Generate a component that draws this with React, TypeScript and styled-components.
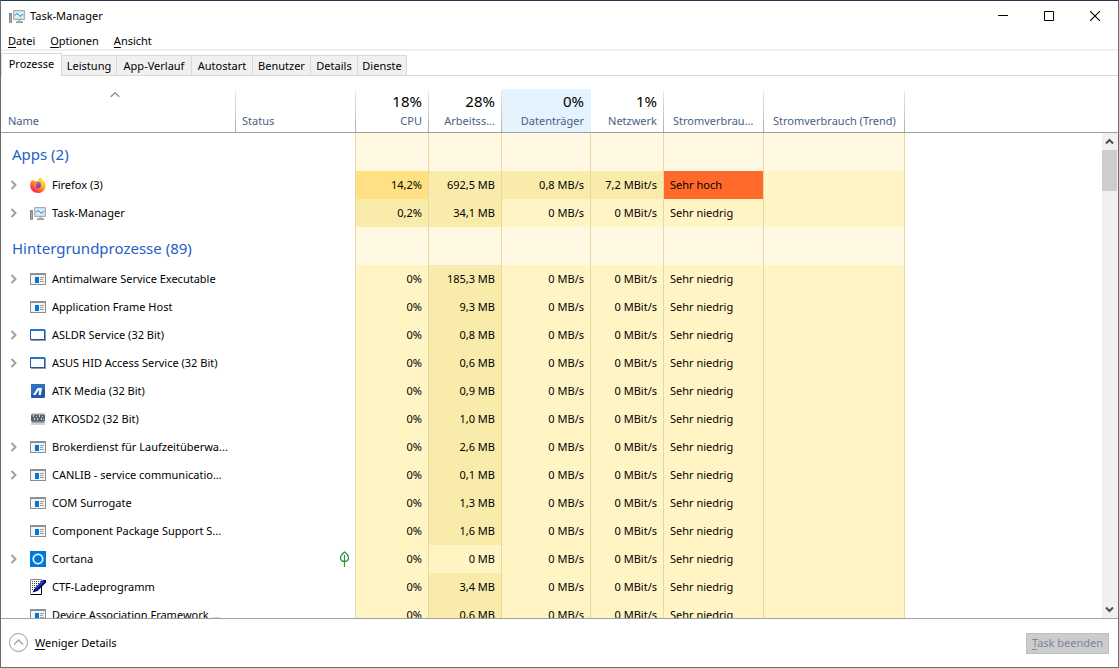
import React from "react";
import styled, { createGlobalStyle, css } from "styled-components";

const Global = createGlobalStyle`
  * { box-sizing: border-box; }
  body { margin: 0; background: #fff; }
  body, button {
    font-family: "Noto Sans", "Open Sans", sans-serif;
    font-size: 11px;
    line-height: 16px;
    color: #000;
  }
  button { margin: 0; padding: 0; border: 0; background: none; }
  svg { display: block; flex: none; }
`;

const Window = styled.div`
  display: flex;
  flex-direction: column;
  height: 100vh;
  border: 1px solid #6b6b6b;
  border-top-color: #24344f;
  background: #fff;
  overflow: hidden;
`;

const TitleBar = styled.header`
  display: flex;
  align-items: center;
  height: 30px;
  flex: none;
  padding-left: 8px;
`;

const Title = styled.h1`
  flex: 1;
  margin: 0 0 0 5px;
  font-size: 11px;
  font-weight: 400;
`;

const CaptionButton = styled.button`
  display: flex;
  align-items: center;
  justify-content: center;
  width: 46px;
  height: 30px;
`;

const MenuBar = styled.nav`
  display: flex;
  gap: 15px;
  flex: none;
  height: 20px;
  padding: 2px 7px 0;
  border-bottom: 2px solid #f0f0f0;
`;

const Key = styled.span`
  text-decoration: underline;
  text-decoration-thickness: 1px;
  text-underline-offset: 2px;
`;

const TabStrip = styled.div`
  display: flex;
  align-items: flex-end;
  flex: none;
  height: 25px;
  border-bottom: 1px solid #d9d9d9;
`;

const Tab = styled.button<{ $width: number; $active?: boolean }>`
  width: ${(p) => p.$width}px;
  height: 20px;
  border: solid #d9d9d9;
  border-width: 1px 1px 0 0;
  background: #f0f0f0;
  white-space: nowrap;
  ${(p) =>
    p.$active &&
    css`
      height: 23px;
      margin-bottom: -1px;
      padding-bottom: 2px;
      border-left-width: 1px;
      background: #fff;
    `}
`;

const Content = styled.main`
  display: flex;
  flex: 1;
  min-height: 0;
  border-bottom: 1px solid #a0a0a0;
`;

const Viewport = styled.div`
  flex: 1;
  min-width: 0;
  overflow: hidden;
`;

const Table = styled.table`
  width: 100%;
  table-layout: fixed;
  border-collapse: separate;
  border-spacing: 0;
`;

const Col = styled.col<{ $width?: number }>`
  width: ${(p) => (p.$width ? `${p.$width}px` : "auto")};
`;

const HeadCell = styled.th`
  height: 57px;
  padding: 13px 0 0;
  border-bottom: 1px solid #a0a0a0;
  font-weight: 400;
  color: #4c607f;
`;

const HeadBox = styled.div<{ $align?: "left" | "right"; $hot?: boolean; $inset?: number }>`
  display: flex;
  flex-direction: column;
  height: 43px;
  padding: 2px 7px 0 ${(p) => p.$inset ?? 6}px;
  gap: 2px;
  text-align: ${(p) => p.$align ?? "right"};
  white-space: nowrap;
  background: ${(p) =>
    p.$hot
      ? "#e5f3ff"
      : "linear-gradient(#e8e8e8, #b0b0b0) right bottom / 1px 41px no-repeat"};
`;

const Total = styled.span`
  height: 20px;
  font-size: 15px;
  line-height: 20px;
  color: #000;
`;

const SortMark = styled.span`
  display: flex;
  justify-content: center;
  height: 20px;
  padding-right: 8px;
`;

const GroupName = styled.th`
  height: 38px;
  padding: 4px 0 0 11px;
  font-size: 15px;
  font-weight: 400;
  line-height: 20px;
  text-align: left;
  white-space: nowrap;
  color: #2460c8;
`;

const GroupCell = styled.td`
  padding: 0;
  border-right: 1px solid #e9d6a0;
  background: #fff8e2;
`;

const NameCell = styled.td`
  height: 28px;
  padding: 0;
`;

const NameBox = styled.div`
  display: flex;
  align-items: center;
  height: 28px;
  padding-left: 9px;
  white-space: nowrap;
`;

const Expander = styled.button`
  display: flex;
  align-items: center;
  width: 14px;
  height: 16px;
  margin-right: 6px;
`;

const NoExpander = styled.span`
  width: 20px;
`;

const Label = styled.span`
  margin-left: 6px;
`;

const StatusCell = styled.td`
  padding: 0 5px 0 0;
  border-right: 1px solid #e9d6a0;
`;

const StatusBox = styled.div`
  display: flex;
  justify-content: flex-end;
`;

const heat = { base: "#fff4c4", mid: "#f9ecaa", high: "#ffe184", alarm: "#ff6a2b" };
type Heat = keyof typeof heat;

const Cell = styled.td<{ $heat?: Heat; $left?: boolean }>`
  padding: 0 6px;
  border-right: 1px solid #e9d6a0;
  background: ${(p) => heat[p.$heat ?? "base"]};
  background-clip: padding-box;
  text-align: ${(p) => (p.$left ? "left" : "right")};
  white-space: nowrap;
`;

const ScrollSide = styled.div`
  display: flex;
  flex-direction: column;
  width: 16px;
  flex: none;
`;

const ScrollHead = styled.div`
  height: 57px;
  flex: none;
  border-bottom: 1px solid #a0a0a0;
`;

const ScrollTrack = styled.div`
  display: flex;
  flex-direction: column;
  flex: 1;
  background: #f0f0f0;
`;

const ScrollButton = styled.button`
  display: flex;
  align-items: center;
  justify-content: center;
  width: 15px;
  height: 17px;
`;

const Thumb = styled.div`
  width: 15px;
  height: 41px;
  margin-bottom: auto;
  background: #cdcdcd;
`;

const Footer = styled.footer`
  display: flex;
  align-items: center;
  justify-content: space-between;
  flex: none;
  height: 48px;
  padding: 0 9px 0 7px;
`;

const LessButton = styled.button`
  display: flex;
  align-items: center;
  gap: 7px;
`;

const EndButton = styled.button`
  min-width: 83px;
  height: 21px;
  border: 1px solid #bfbfbf;
  background: #cccccc;
  color: #7d86a3;
`;

const TaskIcon = () => (
  <svg width="16" height="16" viewBox="0 0 16 16">
    <path d="M0.5 5.5h2v9h-2z" fill="#a8adb0" stroke="#858a8d" />
    <path d="M0 5h3v2H0z" fill="#8b9093" />
    <path d="M1 7h1v1H1z" fill="#36c436" />
    <path d="M4.5 2.5h11v9h-11z" fill="#d5d8da" stroke="#aaaeb1" />
    <path d="M6 4h8v6H6z" fill="#d4f1fd" />
    <path d="M6 7.500l1.700-2 1.800 1 1.800 2L13 6.500l1 .5" fill="none" stroke="#1583c4" />
    <path d="M9 12h3v1H9zM7 13h7v2H7z" fill="#b8bcbe" />
    <path d="M7 14h7v1H7z" fill="#93979a" />
  </svg>
);

const FirefoxIcon = () => (
  <svg width="16" height="16" viewBox="0 0 16 16">
    <defs>
      <linearGradient id="ffBody" x1="0.85" y1="0.1" x2="0.2" y2="0.95">
        <stop offset="0" stopColor="#fff14a" />
        <stop offset="0.4" stopColor="#ffb32b" />
        <stop offset="0.68" stopColor="#ff6030" />
        <stop offset="1" stopColor="#ee2068" />
      </linearGradient>
      <radialGradient id="ffGlobe" cx="0.5" cy="0.25" r="0.8">
        <stop offset="0" stopColor="#a05ae8" />
        <stop offset="1" stopColor="#5b3fb8" />
      </radialGradient>
    </defs>
    <path
      d="M10.2 0.2c1 .5 2 1.5 2.3 2.8 1.7 1.2 3.2 3 3.3 5.4C15.900 12.600 12.400 16 8 16S.2 12.700 .2 8.500C.2 6 1.200 4.200 2.300 2.600l.6 1.500L4.200 3l.9 1.400c.9-.5 2-.7 3-.5C8.500 2.400 9 1 10.200.2z"
      fill="url(#ffBody)"
    />
    <circle cx="8" cy="8" r="2.900" fill="url(#ffGlobe)" />
    <path d="M3.600 5.400c1.500-.4 3-.1 3.900.9-.2.7-1.400.9-1.700 1.300-.2.700.1 1.400 1 1.700-1.200 1.100-2.600.8-3.200-.3z" fill="#ff8a2a" />
  </svg>
);

const AppIcon = () => (
  <svg width="16" height="16" viewBox="0 0 16 16" shapeRendering="crispEdges">
    <path d="M0 2h16v12H0z" fill="#8b8f91" />
    <path d="M1 4h14v9H1z" fill="#f3f3f3" />
    <path d="M5 6h4v6H5z" fill="#0078d7" />
    <path d="M10 6h4v1h-4zM10 8h3v1h-3zM10 10h4v1h-4z" fill="#9b9fa1" />
  </svg>
);

const FrameIcon = () => (
  <svg width="16" height="16" viewBox="0 0 16 16" shapeRendering="crispEdges">
    <path d="M1 3h15v11H1z" fill="#8c99b0" />
    <path d="M0 2h15v11H0z" fill="#2c5697" />
    <path d="M0 2h15v2H0z" fill="#1e78d2" />
    <path d="M1 4h13v8H1z" fill="#fafcff" />
  </svg>
);

const AtkIcon = () => (
  <svg width="16" height="16" viewBox="0 0 16 16">
    <rect x="1" y="1" width="14" height="14" rx="1" fill="#2059ad" />
    <path d="M1 1h14v5L1 12z" fill="#2e6ec3" />
    <path d="M3 12l4.500-7H12l-1.200 7H8.500l.8-4.500H8.500L5.500 12z" fill="#fff" />
  </svg>
);

const OsdIcon = () => (
  <svg width="16" height="16" viewBox="0 0 16 16" shapeRendering="crispEdges">
    <path d="M1 2h14v12H1z" fill="#cdd2d6" />
    <path d="M2 3h12v10H2z" fill="#9aa2aa" />
    <path d="M1 4h14v6H1z" fill="#59616a" />
    <path d="M3.500 4v2M6.500 5v1M9.500 4v2M12.500 5v1M4.500 7v2M7.500 7v2M11.500 7v2M13.500 8v1" stroke="#d8dce0" />
    <path d="M2 10h12v1H2z" fill="#7b838b" />
    <path d="M2 12h12v1H2z" fill="#d0d4d8" />
  </svg>
);

const CortanaIcon = () => (
  <svg width="16" height="16" viewBox="0 0 16 16">
    <path d="M0 0h16v16H0z" fill="#0078d7" />
    <circle cx="8" cy="8" r="4.800" fill="none" stroke="#8fd0f7" strokeWidth="2" />
    <circle cx="8" cy="8" r="4.600" fill="none" stroke="#fff" />
  </svg>
);

const CtfIcon = () => (
  <svg width="16" height="16" viewBox="0 0 16 16">
    <path d="M.5 .5h11v15H.5z" fill="#fff" stroke="#888" />
    <path d="M2 2.500h9M2 4.500h8M2 6.500h7M2 8.500h5M2 10.500h3" stroke="#444" strokeDasharray="1 1" />
    <path d="M1 15.500h10.500V8" fill="none" stroke="#000" />
    <path d="M2.500 13.500L5 9l8-8h3v2.500L7.500 12z" fill="#000050" />
    <path d="M5.500 10.500L14 2" stroke="#1530e0" strokeWidth="1.800" />
  </svg>
);

const LeafIcon = () => (
  <svg width="11" height="16" viewBox="0 0 11 16">
    <path d="M5.500 1C7 2.300 9.500 3.800 9.500 6.800S7.600 10.500 5.500 10.500 1.500 9.500 1.500 6.800 4 2.300 5.500 1z" fill="none" stroke="#2c9447" strokeWidth="1.300" />
    <path d="M5.500 4v12" stroke="#2c9447" strokeWidth="1.200" />
  </svg>
);

const icons = {
  task: TaskIcon,
  firefox: FirefoxIcon,
  app: AppIcon,
  frame: FrameIcon,
  atk: AtkIcon,
  osd: OsdIcon,
  cortana: CortanaIcon,
  ctf: CtfIcon,
};

interface Process {
  name: string;
  icon: keyof typeof icons;
  open?: boolean;
  leaf?: boolean;
  cpu?: string;
  mem: string;
  disk?: string;
  net?: string;
  power?: string;
  heats?: Heat[];
}

const groups: { title: string; rows: Process[] }[] = [
  {
    title: "Apps (2)",
    rows: [
      {
        name: "Firefox (3)",
        icon: "firefox",
        open: true,
        cpu: "14,2%",
        mem: "692,5 MB",
        disk: "0,8 MB/s",
        net: "7,2 MBit/s",
        power: "Sehr hoch",
        heats: ["high", "mid", "mid", "mid", "alarm"],
      },
      { name: "Task-Manager", icon: "task", open: true, cpu: "0,2%", mem: "34,1 MB", heats: ["mid", "mid"] },
    ],
  },
  {
    title: "Hintergrundprozesse (89)",
    rows: [
      { name: "Antimalware Service Executable", icon: "app", open: true, mem: "185,3 MB" },
      { name: "Application Frame Host", icon: "app", mem: "9,3 MB" },
      { name: "ASLDR Service (32 Bit)", icon: "frame", open: true, mem: "0,8 MB" },
      { name: "ASUS HID Access Service (32 Bit)", icon: "frame", open: true, mem: "0,6 MB" },
      { name: "ATK Media (32 Bit)", icon: "atk", mem: "0,9 MB" },
      { name: "ATKOSD2 (32 Bit)", icon: "osd", mem: "1,0 MB" },
      { name: "Brokerdienst für Laufzeitüberwa...", icon: "app", open: true, mem: "2,6 MB" },
      { name: "CANLIB - service communicatio...", icon: "app", open: true, mem: "0,1 MB" },
      { name: "COM Surrogate", icon: "app", mem: "1,3 MB" },
      { name: "Component Package Support S...", icon: "app", mem: "1,6 MB" },
      { name: "Cortana", icon: "cortana", open: true, leaf: true, mem: "0 MB", heats: ["base", "base"] },
      { name: "CTF-Ladeprogramm", icon: "ctf", mem: "3,4 MB" },
      { name: "Device Association Framework ...", icon: "app", mem: "0,6 MB" },
    ],
  },
];

const tabs: [string, number][] = [
  ["Prozesse", 61],
  ["Leistung", 55],
  ["App-Verlauf", 75],
  ["Autostart", 61],
  ["Benutzer", 58],
  ["Details", 47],
  ["Dienste", 49],
];

const totals: [string, string][] = [
  ["18%", "CPU"],
  ["28%", "Arbeitss..."],
  ["0%", "Datenträger"],
  ["1%", "Netzwerk"],
];

const widths = [235, 120, 73, 73, 89, 73, 100, 141];

function ProcessRow({ row }: { row: Process }) {
  const Icon = icons[row.icon];
  const h = row.heats ?? ["base", "mid"];
  return (
    <tr>
      <NameCell>
        <NameBox>
          {row.open ? (
            <Expander aria-label="Erweitern">
              <svg width="8" height="10" viewBox="0 0 8 10">
                <path d="M1.500 1l4 4-4 4" fill="none" stroke="#a0a0a0" strokeWidth="2" />
              </svg>
            </Expander>
          ) : (
            <NoExpander />
          )}
          <Icon />
          <Label>{row.name}</Label>
        </NameBox>
      </NameCell>
      <StatusCell>
        <StatusBox>{row.leaf && <LeafIcon />}</StatusBox>
      </StatusCell>
      <Cell $heat={h[0]}>{row.cpu ?? "0%"}</Cell>
      <Cell $heat={h[1]}>{row.mem}</Cell>
      <Cell $heat={h[2]}>{row.disk ?? "0 MB/s"}</Cell>
      <Cell $heat={h[3]}>{row.net ?? "0 MBit/s"}</Cell>
      <Cell $heat={h[4]} $left>
        {row.power ?? "Sehr niedrig"}
      </Cell>
      <Cell />
      <td />
    </tr>
  );
}

export default function App() {
  return (
    <Window>
      <Global />
      <TitleBar>
        <TaskIcon />
        <Title>Task-Manager</Title>
        <CaptionButton aria-label="Minimieren">
          <svg width="10" height="10" viewBox="0 0 10 10">
            <path d="M0 4.500h10" stroke="#000" />
          </svg>
        </CaptionButton>
        <CaptionButton aria-label="Maximieren">
          <svg width="10" height="10" viewBox="0 0 10 10">
            <path d="M.5 .5h9v9h-9z" fill="none" stroke="#000" />
          </svg>
        </CaptionButton>
        <CaptionButton aria-label="Schließen">
          <svg width="10" height="10" viewBox="0 0 10 10">
            <path d="M0 0l10 10M10 0L0 10" stroke="#000" strokeWidth="1.100" />
          </svg>
        </CaptionButton>
      </TitleBar>
      <MenuBar>
        <button><Key>D</Key>atei</button>
        <button><Key>O</Key>ptionen</button>
        <button><Key>A</Key>nsicht</button>
      </MenuBar>
      <TabStrip role="tablist">
        {tabs.map(([name, width], i) => (
          <Tab key={name} role="tab" aria-selected={i === 0} $width={width} $active={i === 0}>
            {name}
          </Tab>
        ))}
      </TabStrip>
      <Content>
        <Viewport>
          <Table>
            <colgroup>
              {widths.map((w, i) => (
                <Col key={i} $width={w} />
              ))}
              <Col />
            </colgroup>
            <thead>
              <tr>
                <HeadCell scope="col">
                  <HeadBox $align="left" $inset={7}>
                    <SortMark>
                      <svg width="10" height="7" viewBox="0 0 10 7">
                        <path d="M.8 5.800L5 1.800l4.200 4" fill="none" stroke="#808a9a" strokeWidth="1.300" />
                      </svg>
                    </SortMark>
                    <span>Name</span>
                  </HeadBox>
                </HeadCell>
                <HeadCell scope="col">
                  <HeadBox $align="left">
                    <Total />
                    <span>Status</span>
                  </HeadBox>
                </HeadCell>
                {totals.map(([total, name], i) => (
                  <HeadCell key={name} scope="col">
                    <HeadBox $hot={i === 2}>
                      <Total>{total}</Total>
                      <span>{name}</span>
                    </HeadBox>
                  </HeadCell>
                ))}
                {["Stromverbrau...", "Stromverbrauch (Trend)"].map((name) => (
                  <HeadCell key={name} scope="col">
                    <HeadBox $align="left" $inset={9}>
                      <Total />
                      <span>{name}</span>
                    </HeadBox>
                  </HeadCell>
                ))}
                <HeadCell as="td" />
              </tr>
            </thead>
            {groups.map((group) => (
              <tbody key={group.title}>
                <tr>
                  <GroupName scope="rowgroup">{group.title}</GroupName>
                  <StatusCell />
                  {widths.slice(2).map((_, i) => (
                    <GroupCell key={i} />
                  ))}
                  <td />
                </tr>
                {group.rows.map((row) => (
                  <ProcessRow key={row.name} row={row} />
                ))}
              </tbody>
            ))}
          </Table>
        </Viewport>
        <ScrollSide>
          <ScrollHead />
          <ScrollTrack>
            <ScrollButton aria-label="Nach oben">
              <svg width="9" height="7" viewBox="0 0 9 7">
                <path d="M1 5.500l3.500-3.500L8 5.500" fill="none" stroke="#505050" strokeWidth="2" />
              </svg>
            </ScrollButton>
            <Thumb />
            <ScrollButton aria-label="Nach unten">
              <svg width="9" height="7" viewBox="0 0 9 7">
                <path d="M1 1.500L4.500 5 8 1.500" fill="none" stroke="#505050" strokeWidth="2" />
              </svg>
            </ScrollButton>
          </ScrollTrack>
        </ScrollSide>
      </Content>
      <Footer>
        <LessButton>
          <svg width="20" height="20" viewBox="0 0 20 20">
            <circle cx="10.500" cy="9.500" r="9" fill="none" stroke="#9a9a9a" />
            <path d="M6 11.500l4.500-4.500 4.500 4.500" fill="none" stroke="#a8a8a8" strokeWidth="1.500" />
          </svg>
          <span><Key>W</Key>eniger Details</span>
        </LessButton>
        <EndButton disabled><Key>T</Key>ask beenden</EndButton>
      </Footer>
    </Window>
  );
}
